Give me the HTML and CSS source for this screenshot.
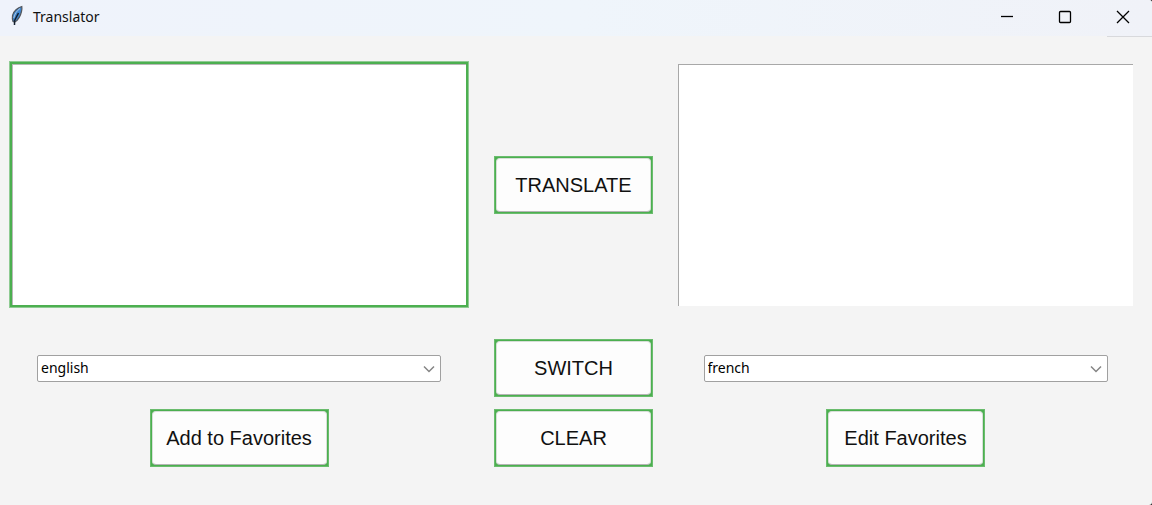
FILE: index.html
```html
<!DOCTYPE html>
<html lang="en">
<head>
<meta charset="utf-8">
<meta name="viewport" content="width=device-width, initial-scale=1">
<title>Translator</title>
<link rel="stylesheet" href="styles.css">
</head>
<body>
<div class="window">
  <header class="titlebar">
    <svg class="feather" viewBox="0 0 14 22" width="14" height="22" aria-hidden="true">
      <path d="M11.800 1.500C8 2.500 3.300 6 2.500 10.500c-.4 2.500 0 4.500.5 6l1.800.5C8 15 10.500 11 11.500 6.500c.4-2 .6-3.500.3-5z" fill="#3f86cf" stroke="#54575c" stroke-width="1.200"/>
      <path d="M10 3.500C7 5.500 4.500 9 3.800 13" fill="none" stroke="#a9c4df" stroke-width="1"/>
      <path d="M8.500 8C7 11 5.500 13.500 4.600 15.500L4.500 20" fill="none" stroke="#15202e" stroke-width="1.500"/>
    </svg>
    <h1 class="title">Translator</h1>
    <div class="controls">
      <button class="control" type="button" aria-label="Minimize">
        <svg viewBox="0 0 14 14" width="14" height="14"><path d="M1 6.500h12"/></svg>
      </button>
      <button class="control" type="button" aria-label="Maximize">
        <svg viewBox="0 0 14 14" width="14" height="14"><rect x="1.500" y="1.500" width="11" height="11" rx="1"/></svg>
      </button>
      <button class="control close" type="button" aria-label="Close">
        <svg viewBox="0 0 14 14" width="14" height="14"><path d="M1 1l12 12M13 1L1 13"/></svg>
      </button>
    </div>
  </header>
  <main class="content">
    <textarea class="text source" aria-label="Text to translate"></textarea>
    <button class="action" type="button"><span class="face">TRANSLATE</span></button>
    <textarea class="text result" aria-label="Translation"></textarea>

    <div class="language">
      <select class="select" aria-label="Source language"><option>english</option></select>
      <svg class="chevron" viewBox="0 0 12 8" width="12" height="8" aria-hidden="true"><path d="M1 1.500l5 5 5-5"/></svg>
    </div>
    <button class="action" type="button"><span class="face">SWITCH</span></button>
    <div class="language">
      <select class="select" aria-label="Target language"><option>french</option></select>
      <svg class="chevron" viewBox="0 0 12 8" width="12" height="8" aria-hidden="true"><path d="M1 1.500l5 5 5-5"/></svg>
    </div>

    <button class="action wide" type="button"><span class="face">Add to Favorites</span></button>
    <button class="action" type="button"><span class="face">CLEAR</span></button>
    <button class="action" type="button"><span class="face">Edit Favorites</span></button>
  </main>
</div>
</body>
</html>
```
FILE: styles.css
```css
* {
  box-sizing: border-box;
}

html {
  background: #222;
}

body {
  margin: 0;
  color: #111;
  font-family: "Liberation Sans", Arial, sans-serif;
}

.window {
  min-height: 100vh;
  overflow: hidden;
  border-radius: 0 3px 3px 0;
  background: #f4f4f4;
}

.titlebar {
  display: flex;
  align-items: center;
  height: 36px;
  padding-left: 10px;
  background: linear-gradient(90deg, #eff3fb, #eff5fb 50%, #f0f2f8);
}

.feather {
  margin-bottom: 4px;
}

.title {
  margin: 0 0 2px 9px;
  font: 400 14px/20px "Noto Sans", "Open Sans", sans-serif;
}

.controls {
  display: flex;
  align-self: stretch;
  margin-left: auto;
}

.control {
  display: flex;
  align-items: center;
  justify-content: center;
  width: 58px;
  padding: 0 0 2px;
  border: 0;
  background: none;
}

.control svg {
  fill: none;
  stroke: #000;
  stroke-width: 1.3;
}

.close {
  position: relative;
}

.close::after {
  content: "";
  position: absolute;
  top: 100%;
  right: 0;
  width: 45px;
  height: 1px;
  background: #d8d9dc;
}

.content {
  display: grid;
  grid-template-columns: minmax(0, 460fr) 159px minmax(0, 455fr);
  column-gap: 25px;
  row-gap: 12px;
  align-items: center;
  justify-items: center;
  padding: 25px 19px 38px 9px;
}

.text {
  width: 100%;
  margin: 0 0 19px;
  padding: 4px;
  border: 0;
  border-radius: 0;
  outline: 0;
  background: #fff;
  font: 20px/24px "Liberation Sans", Arial, sans-serif;
  resize: none;
}

.source {
  height: 247px;
  border: 1px solid #8fcb93;
  box-shadow: inset 0 0 0 2px #4caf50, inset 3px 3px #b8b8b8;
}

.result {
  height: 242px;
  border-top: 1px solid #a8a8a8;
  border-left: 1px solid #a8a8a8;
}

.content > .text + .action {
  margin-bottom: 19px;
}

.action {
  width: 159px;
  height: 58px;
  padding: 1px;
  border: 1px solid #6abc6d;
  background: #4caf50;
  color: #111;
  font: 20px/24px "Liberation Sans", Arial, sans-serif;
}

.wide {
  width: 179px;
}

.face {
  display: flex;
  align-items: center;
  justify-content: center;
  height: 100%;
  border: 1px solid #d8ded8;
  border-bottom-color: #b5b5b5;
  border-radius: 4px;
  background: #fdfdfd;
}

.language {
  position: relative;
  width: 100%;
  max-width: 404px;
}

.select {
  display: block;
  width: 100%;
  height: 27px;
  padding: 0 24px 0 3px;
  border: 1px solid #a0a0a0;
  border-radius: 2px;
  appearance: none;
  background: #fff;
  color: #000;
  font: 14px/20px "Noto Sans", "Open Sans", sans-serif;
}

.chevron {
  position: absolute;
  top: 10px;
  right: 6px;
  fill: none;
  stroke: #858585;
  stroke-width: 1.5;
  pointer-events: none;
}
```
